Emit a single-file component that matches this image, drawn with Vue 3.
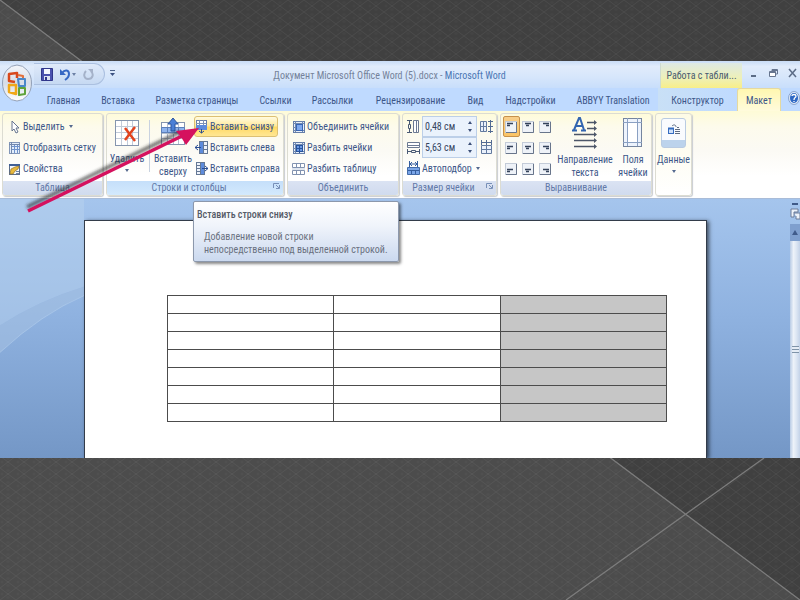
<script setup>
import { ref } from 'vue'

const tabs = [
  'Главная', 'Вставка', 'Разметка страницы', 'Ссылки', 'Рассылки', 'Рецензирование',
  'Вид', 'Надстройки', 'ABBYY Translation', 'Конструктор', 'Макет',
]
const tableTools = [
  { icon: 'cursor', label: 'Выделить', menu: true },
  { icon: 'gridlines', label: 'Отобразить сетку' },
  { icon: 'properties', label: 'Свойства' },
]
const mergeTools = [
  { icon: 'merge', label: 'Объединить ячейки' },
  { icon: 'split', label: 'Разбить ячейки' },
  { icon: 'split-table', label: 'Разбить таблицу' },
]
const rowHeight = ref('0,48 см')
const colWidth = ref('5,63 см')

const alignments = []
for (let row = 0; row < 3; row++) {
  for (let col = 0; col < 3; col++) {
    alignments.push({
      y: [4, 6, 8][row],
      long: [2, 3, 4][col],
      short: [2, 4, 7][col],
      label: ['Сверху', 'По центру', 'Снизу'][row] + ', ' + ['слева', 'посередине', 'справа'][col],
    })
  }
}
const active = ref(0)
</script>

<template>
  <div class="slide">
    <svg class="backdrop" viewBox="0 0 800 600" preserveAspectRatio="none" aria-hidden="true">
      <defs>
        <pattern id="weave" width="16" height="12" patternUnits="userSpaceOnUse">
          <path d="M0 0L16 12M16 0L0 12" stroke="#fff" stroke-opacity=".05" fill="none" />
          <path d="M8 1L10 2.500L8 4L6 2.500ZM8 8L10 9.500L8 11L6 9.500ZM2 4.500L4 6L2 7.500L0 6Z" fill="#fff" fill-opacity=".02" />
        </pattern>
      </defs>
      <rect width="800" height="600" fill="#404040" />
      <path d="M0 0L800 600H0Z" fill="#4c4c4c" />
      <rect width="800" height="600" fill="url(#weave)" />
      <path d="M0 0L800 600M566 600L764 458" stroke="#7c7c7c" stroke-width="1.300" fill="none" />
    </svg>

    <svg class="symbols" aria-hidden="true">
      <symbol id="cursor" viewBox="0 0 13 14"><path d="M4 1V11L6 9L8 13L10 12L8 8H11Z" fill="#fff" stroke="#66758f" /></symbol>
      <symbol id="gridlines" viewBox="0 0 13 14">
        <rect x="1.500" y="1.500" width="10" height="11" fill="#e4eefb" stroke="#8296b8" />
        <path d="M6.500 4V12M9.500 4V12M4 5.500H12M4 8.500H12" stroke="#6f93cd" />
        <path d="M3.500 1V13M1 3.500H12" stroke="#7388ac" />
      </symbol>
      <symbol id="properties" viewBox="0 0 13 14">
        <rect x="1.500" y="2.500" width="10" height="10" fill="#f4f7fc" stroke="#5c6d89" />
        <path d="M1 3H12" stroke="#3f5f96" stroke-width="2" />
        <path d="M2 12L3 7L7 5L11 4L10 7L7 9L5 12Z" fill="#e9b93c" stroke="#947225" stroke-width=".7" />
        <path d="M8 9.500H11M8 11.500H11" stroke="#6f83a3" />
      </symbol>
      <symbol id="row-below" viewBox="0 0 13 15">
        <rect x="1.500" y="1.500" width="10" height="9" fill="#fff" stroke="#677ea8" />
        <path d="M1 4.500H11M4.500 1V7M8.500 1V7" stroke="#7d92b5" />
        <rect x="1" y="6" width="11" height="5" fill="#5d8bdc" />
        <path d="M6.500 10V14M4 12L6.500 14L9 12" stroke="#2a4d90" fill="none" />
      </symbol>
      <symbol id="col-left" viewBox="0 0 13 15">
        <rect x="4.500" y="1.500" width="8" height="12" fill="#eef3fb" stroke="#657895" />
        <rect x="5" y="2" width="3" height="11" fill="#5d8bdc" />
        <path d="M8.500 1V13M8 5.500H12M8 9.500H12" stroke="#657895" />
        <path d="M6 7.500H0M3 5L0 7.500L3 10" stroke="#294d94" fill="none" />
      </symbol>
      <symbol id="col-right" viewBox="0 0 13 15">
        <rect x="1.500" y="1.500" width="8" height="12" fill="#eef3fb" stroke="#657895" />
        <rect x="6" y="2" width="3" height="11" fill="#5d8bdc" />
        <path d="M5.500 1V13M1 4.500H6M1 7.500H6M1 10.500H6" stroke="#657895" />
        <path d="M7 7.500H13M10 5L13 7.500L10 10" stroke="#294d94" fill="none" />
      </symbol>
      <symbol id="merge" viewBox="0 0 13 14">
        <rect x="1.500" y="1.500" width="11" height="11" fill="#e7effa" stroke="#647da8" />
        <path d="M3.500 1V12M1 3.500H12M10.500 1V4M10.500 10V12M1 10.500H12M1 7.500H4" stroke="#7088af" />
        <rect x="4.500" y="4.500" width="6" height="6" fill="#7fa9ee" stroke="#3966b4" />
      </symbol>
      <symbol id="split" viewBox="0 0 13 14">
        <rect x="1.500" y="1.500" width="11" height="11" fill="#e7effa" stroke="#647da8" />
        <path d="M3.500 1V12M1 3.500H12M10.500 1V4M1 10.500H12M1 7.500H4" stroke="#7088af" />
        <rect x="4.500" y="4.500" width="6" height="6" fill="#6d9ae5" stroke="#28549d" />
        <path d="M7.500 4V12M4 7.500H11" stroke="#28549d" />
      </symbol>
      <symbol id="split-table" viewBox="0 0 13 14">
        <path d="M.5 1.500H12.500V5.500H.5ZM4.500 1V5M8.500 1V5M.5 8.500H12.500V12.500H.5ZM4.500 9V13M8.500 9V13" fill="#fff" stroke="#8293b0" />
        <path d="M0 7H13" stroke="#c3cfe2" />
      </symbol>
      <symbol id="autofit" viewBox="0 0 13 15">
        <path d="M2.500 0V6M10.500 0V6M3 3H10M5 1L3 3L5 5M8 1L10 3L8 5" stroke="#345d9f" fill="none" />
        <path d="M.5 6.500H12.500V13.500H.5Z" fill="#7aa5e8" stroke="#436ba8" />
        <path d="M1 9.500H12M4.500 9V13M8.500 9V13" stroke="#355e9e" />
      </symbol>
    </svg>

    <main class="word">
      <header class="title-bar">
        <div class="quick">
          <button aria-label="Сохранить">
            <svg width="12" height="13" viewBox="0 0 12 13"><path d="M.5 .5H11.500V12.500H.5Z" fill="#4a51ae" stroke="#30368a" /><rect x="3" y="1" width="6" height="5" fill="#f5f7ff" /><rect x="3" y="8" width="6" height="4" fill="#dde2f2" /><rect x="4" y="9" width="2" height="3" fill="#30368a" /></svg>
          </button>
          <button class="undo" aria-label="Отменить">
            <svg width="18" height="13" viewBox="0 0 18 13"><path d="M3 5C6 1 10 2 10 6C10 8 9 10 6 12" stroke="#3768c4" stroke-width="2" fill="none" /><path d="M1 1V7H7Z" fill="#3768c4" /><path d="M13 5H17L15 8Z" fill="#6c80a5" /></svg>
          </button>
          <button aria-label="Повторить">
            <svg width="12" height="13" viewBox="0 0 12 13"><path d="M3 3C0 6 1 11 5 11C10 11 11 6 8 3" stroke="#a5b2c9" stroke-width="2" fill="none" /><path d="M5 1H10V6Z" fill="#a5b2c9" /></svg>
          </button>
        </div>
        <button class="customize" aria-label="Настройка панели быстрого доступа">
          <svg width="7" height="8" viewBox="0 0 7 8"><path d="M1 1.500H6" stroke="#4b6088" /><path d="M1 4H6L3.500 7Z" fill="#3a5080" /></svg>
        </button>
        <h1><span>Документ Microsoft Office Word (5).docx -</span> Microsoft Word</h1>
        <div class="context">Работа с табли...</div>
        <div class="controls">
          <button aria-label="Свернуть"><svg width="9" height="10" viewBox="0 0 9 10"><path d="M2 8H7" stroke="#5c6c86" stroke-width="2" /></svg></button>
          <button aria-label="Восстановить"><svg width="9" height="10" viewBox="0 0 9 10"><path d="M3 3V1.500H8.500V6H6" fill="none" stroke="#66758f" /><path d="M.5 3.500H6.500V8.500H.5Z" fill="#fff" stroke="#66758f" /><path d="M1 4.500H6M3 2.500H8" stroke="#66758f" /></svg></button>
          <button aria-label="Закрыть"><svg width="9" height="10" viewBox="0 0 9 10"><path d="M1 1L8 9M8 1L1 9" stroke="#5c6c86" stroke-width="1.500" /></svg></button>
        </div>
      </header>

      <button class="orb" aria-label="Кнопка Office">
        <svg width="34" height="38" viewBox="0 0 34 38">
          <defs>
            <linearGradient id="orb-fill" x1="0" y1="0" x2="0" y2="1"><stop offset="0" stop-color="#f4f6fa" /><stop offset=".5" stop-color="#d6dde8" /><stop offset="1" stop-color="#fff" /></linearGradient>
          </defs>
          <ellipse cx="16" cy="19" rx="14.500" ry="18" fill="url(#orb-fill)" stroke="#93a1b8" />
          <g fill="none" stroke-width="2.500" stroke-linejoin="round">
            <path d="M14 18L8 17V10L16 9V14" stroke="#d9481c" />
            <path d="M17 11L22 12V14" stroke="#e2703a" stroke-width="2" />
            <path d="M17 15H24V22H18Z" stroke="#4a87c9" stroke-width="2" />
            <path d="M15 21H8V28L15 30Z" stroke="#f0a818" />
            <path d="M18 24H24V30L18 31Z" stroke="#5fa33a" stroke-width="2" />
          </g>
        </svg>
      </button>

      <nav class="tabs" aria-label="Вкладки ленты">
        <button v-for="tab in tabs" :key="tab" :class="{ selected: tab === 'Макет', contextual: tab === 'Конструктор' }">{{ tab }}</button>
        <button class="help" aria-label="Справка">
          <svg width="12" height="14" viewBox="0 0 12 14"><ellipse cx="6" cy="7" rx="5.500" ry="6.500" fill="#dce8f8" stroke="#8ba5cf" /><ellipse cx="6" cy="7" rx="4" ry="5" fill="#2e68c4" /><path d="M4 5C4 3 8 3 8 5C8 7 6 6 6 9M6 10V11" fill="none" stroke="#fff" stroke-width="1.300" /></svg>
        </button>
      </nav>

      <section class="ribbon" aria-label="Макет">
        <div class="group g-table">
          <div class="body stack">
            <button v-for="t in tableTools" :key="t.label" class="tool">
              <svg width="13" height="14"><use :href="'#' + t.icon" /></svg>{{ t.label }}<i v-if="t.menu" class="caret"></i>
            </button>
          </div>
          <footer>Таблица</footer>
        </div>

        <div class="group g-rows hot">
          <div class="body">
            <button class="big del">
              <svg width="26" height="29" viewBox="0 0 26 29">
                <rect x="1.500" y="1.500" width="23" height="25" fill="#fff" stroke="#8595ae" />
                <path d="M2 7.500H24M2 13.500H24M2 19.500H24M7.500 2V26M13.500 2V26M18.500 2V26" stroke="#c2cbd9" />
                <path d="M11 9L21 22M21 8L11 21" stroke="#e2431e" stroke-width="2.500" fill="none" />
              </svg>
              <span>Удалить</span><i class="caret"></i>
            </button>
            <div class="rule"></div>
            <button class="big above">
              <svg width="26" height="29" viewBox="0 0 26 29">
                <rect x="1.500" y="4.500" width="23" height="22" fill="#fff" stroke="#8595ae" />
                <path d="M2 15.500H24M2 20.500H24M7.500 5V26M13.500 5V26M18.500 5V26" stroke="#b4bfd0" />
                <path d="M1.500 9.500H24.500V14.500H1.500ZM7.500 9V15M18.500 9V15" fill="#8fb4ee" stroke="#5c80bb" />
                <path d="M13 0L18 6H15V13H11V6H8Z" fill="#4a7fd6" stroke="#2d569f" />
              </svg>
              <span>Вставить<br>сверху</span>
            </button>
            <div class="stack inserts">
              <button class="tool hover" aria-describedby="tip"><svg width="13" height="15"><use href="#row-below" /></svg>Вставить снизу</button>
              <button class="tool"><svg width="13" height="15"><use href="#col-left" /></svg>Вставить слева</button>
              <button class="tool"><svg width="13" height="15"><use href="#col-right" /></svg>Вставить справа</button>
            </div>
          </div>
          <footer class="with-launcher">Строки и столбцы
            <button class="launcher" aria-label="Параметры строк и столбцов"><svg width="7" height="8" viewBox="0 0 7 8"><path d="M.5 6V1.500H6M3 3L6 6M6.500 3V6.500H3" fill="none" stroke="#7890b8" /></svg></button>
          </footer>
          <div id="tip" class="tooltip" role="tooltip">
            <strong>Вставить строки снизу</strong>
            <p>Добавление новой строки<br>непосредственно под выделенной строкой.</p>
          </div>
        </div>

        <div class="group g-merge">
          <div class="body stack">
            <button v-for="t in mergeTools" :key="t.label" class="tool">
              <svg width="13" height="14"><use :href="'#' + t.icon" /></svg>{{ t.label }}
            </button>
          </div>
          <footer>Объединить</footer>
        </div>

        <div class="group g-size">
          <div class="body stack">
            <div class="size-row">
              <svg width="13" height="15" viewBox="0 0 13 15"><path d="M6.500 1.500H11.500V13.500H6.500ZM9.500 1V14" fill="#fff" stroke="#6c7a92" /><path d="M0 1.500H5M0 13.500H5M2.500 2V5M2.500 10V13M1.500 5.500H3.500V9.500H1.500Z" fill="none" stroke="#4a5a75" /></svg>
              <label class="spin"><input v-model="rowHeight" aria-label="Высота строки"><i class="arrows"></i></label>
              <button aria-label="Выровнять высоту строк"><svg width="13" height="15" viewBox="0 0 13 15"><path d="M.5 2.500H6.500V12.500H.5ZM1 7.500H7M3.500 2V13" fill="#eaf1fb" stroke="#637a9f" /><path d="M8 2.500H13M8 12.500H13M8 7.500H13M10.500 1V14" stroke="#536b93" /></svg></button>
            </div>
            <div class="size-row">
              <svg width="13" height="15" viewBox="0 0 13 15"><path d="M.5 2.500H12.500V7.500H.5ZM1 5.500H12" fill="#fff" stroke="#6c7a92" /><path d="M.5 9V14M12.500 9V14M1 11.500H4M9 11.500H12M4.500 10.500H8.500V12.500H4.500Z" fill="none" stroke="#4a5a75" /></svg>
              <label class="spin"><input v-model="colWidth" aria-label="Ширина столбца"><i class="arrows"></i></label>
              <button aria-label="Выровнять ширину столбцов"><svg width="13" height="15" viewBox="0 0 13 15"><path d="M1.500 5.500H11.500V13.500H1.500ZM1 9.500H12M6.500 6V13" fill="#eaf1fb" stroke="#637a9f" /><path d="M1.500 0V5M11.500 0V5M6.500 0V5M1 2.500H12" stroke="#536b93" /></svg></button>
            </div>
            <button class="tool"><svg width="13" height="15"><use href="#autofit" /></svg>Автоподбор<i class="caret"></i></button>
          </div>
          <footer class="with-launcher">Размер ячейки
            <button class="launcher" aria-label="Параметры размера ячейки"><svg width="7" height="8" viewBox="0 0 7 8"><path d="M.5 6V1.500H6M3 3L6 6M6.500 3V6.500H3" fill="none" stroke="#7890b8" /></svg></button>
          </footer>
        </div>

        <div class="group g-align">
          <div class="body">
            <div class="align-grid">
              <button v-for="(a, i) in alignments" :key="i" :class="{ on: active === i }" :aria-label="a.label" @click="active = i">
                <svg width="13" height="14" viewBox="0 0 13 14">
                  <rect x=".5" y="1.500" width="11" height="11" fill="#eef2f8" stroke="#c3cbd8" />
                  <path d="M11.500 2V12.500H1" fill="none" stroke="#68758b" />
                  <path :d="`M${a.long} ${a.y - .5}h6M${a.short} ${a.y + 1.5}h3`" stroke="#34425a" stroke-width="1.500" />
                </svg>
              </button>
            </div>
            <button class="big direction">
              <svg width="26" height="32" viewBox="0 0 26 32">
                <path d="M2 13L7 1H8L12 13M4 9H10M0 13.500H5M9 13.500H14" stroke="#3265b0" stroke-width="2" fill="none" />
                <path d="M15 5.500H23M15 11.500H23M2 17.500H23M2 23.500H23M2 29.500H23" stroke="#4c5668" stroke-width="1.400" />
                <path d="M22 3L25 5.500L22 8ZM22 9L25 11.500L22 14ZM22 15L25 17.500L22 20ZM22 21L25 23.500L22 26ZM22 27L25 29.500L22 32Z" fill="#4c5668" />
              </svg>
              <span>Направление<br>текста</span>
            </button>
            <button class="big margins">
              <svg width="22" height="32" viewBox="0 0 22 32">
                <rect x="1.500" y="1.500" width="18" height="28" fill="#edf3fc" stroke="#75859f" />
                <rect x="5" y="5" width="11" height="20" fill="#fff" />
                <path d="M5.500 1V29M15.500 1V29M1 5.500H20M1 25.500H20" stroke="#8aa0c2" />
              </svg>
              <span>Поля<br>ячейки</span>
            </button>
          </div>
          <footer>Выравнивание</footer>
        </div>

        <div class="group g-data">
          <button class="big data">
            <span class="tile">
              <svg width="14" height="12" viewBox="0 0 14 12"><rect x="1.500" y="4.500" width="5" height="5" fill="#cfe1fa" stroke="#356cc0" /><path d="M1 4.500H7" stroke="#356cc0" stroke-width="2" /><path d="M5 2C7 0 9 1 9 3M8 5.500H13M8 7.500H13M8 9.500H13M10 3.500H12" stroke="#5d6b82" fill="none" /></svg>
            </span>
            <span>Данные</span><i class="caret"></i>
          </button>
        </div>
      </section>

      <section class="workspace">
        <svg class="swoosh" viewBox="0 0 84 260" preserveAspectRatio="none" aria-hidden="true">
          <path d="M0 0H84V88Q38 102 0 127Z" fill="#b8d2ee" fill-opacity=".5" />
          <path d="M0 127Q38 102 84 88V97Q42 115 0 154Z" fill="#a5c1e2" fill-opacity=".55" />
          <path d="M0 154Q42 115 84 97" fill="none" stroke="#b9d2ef" stroke-opacity=".5" />
        </svg>
        <article class="page">
          <table aria-label="Таблица документа">
            <tbody>
              <tr v-for="r in 7" :key="r"><td></td><td></td><td class="picked"></td></tr>
            </tbody>
          </table>
        </article>
        <aside class="scroll">
          <span class="splitter"></span>
          <button aria-label="Линейка"><svg width="10" height="12" viewBox="0 0 10 12"><path d="M1 1H8V4H4V9H1ZM4 5H10V11H6V8" fill="#edf2fa" stroke="#6d7d9a" /></svg></button>
          <button class="up" aria-label="Прокрутить вверх"><svg width="10" height="17" viewBox="0 0 10 17"><path d="M2 11L5 6L8 11Z" fill="#405b8a" /></svg></button>
          <div class="track"><span class="grip"></span></div>
        </aside>
      </section>

      <svg class="pointer" width="210" height="160" viewBox="0 0 210 160" aria-hidden="true">
        <defs><filter id="soft" x="-10%" y="-10%" width="120%" height="120%"><feGaussianBlur stdDeviation="1.500" /></filter></defs>
        <path d="M27 146L180 71" stroke="#222" stroke-opacity=".6" stroke-width="4" filter="url(#soft)" />
        <path d="M28 150L184 74" stroke="#d5115e" stroke-width="3.500" />
        <path d="M199 67L176 70L181 76L186 84Z" fill="#d5115e" />
      </svg>
    </main>
  </div>
</template>

<style>
body { margin: 0; }
</style>

<style scoped>
.slide {
  position: relative;
  min-height: 100vh;
  padding: 61px 0 142px;
  box-sizing: border-box;
  background: #444;
  font: 10px/13px "Roboto Condensed", Roboto, "Open Sans", sans-serif;
  color: #3c5688;
}
.backdrop { position: absolute; inset: 0; width: 100%; height: 100%; }
.symbols { position: absolute; width: 0; height: 0; }
svg { display: block; flex: none; }
button {
  font: inherit; color: inherit; background: none; border: 0; padding: 0; margin: 0;
  display: flex; align-items: center; justify-content: center;
}
.word { position: relative; overflow: hidden; background: #bfdbff; }

.title-bar {
  display: flex; height: 27px;
  background: linear-gradient(#c9dcf6, #e1ecfb 20%, #d6e6fb 60%, #c8defb);
}
.quick {
  display: flex; align-items: center; gap: 6px;
  width: 71px; height: 22px; margin: 2px 0 0 34px; padding-left: 7px; box-sizing: border-box;
  border: 1px solid #abc0e0; border-left: 0; border-radius: 0 11px 11px 0;
  background: linear-gradient(#dfeafa, #c6d9f2);
}
.customize { width: 15px; height: 24px; margin-right: -1px; }
h1 { flex: 1; margin: 0; font-size: 10px; font-weight: 400; line-height: 29px; text-align: center; white-space: nowrap; color: #4a76b4; }
h1 span { color: #74829a; }
.context {
  width: 82px; margin-top: 2px; line-height: 26px; text-align: center; white-space: nowrap;
  background: linear-gradient(#dde9e4, #eef0b8 60%, #f8ee88);
  border-left: 1px solid #cfdcd0; box-sizing: border-box; color: #4a5c70;
}
.controls { width: 58px; display: flex; justify-content: space-between; align-items: flex-start; padding: 7px 3px 0 7px; box-sizing: border-box; }

.orb { position: absolute; left: 1px; top: 3px; }

.tabs {
  display: grid; height: 23px; padding-left: 36px;
  grid-template-columns: 55fr 54fr 104fr 53fr 61fr 95fr 35fr 75fr 90fr 79fr 44fr 19fr;
  background: #bfdaff;
}
.tabs button { white-space: nowrap; padding-top: 2px; }
.tabs .contextual { background: linear-gradient(90deg, #c9e0f6, #bfdaff); }
.tabs .selected {
  background: linear-gradient(#fff7b0, #fffbdc); border: 1px solid #e5d9a0; border-bottom: 0;
  border-radius: 3px 3px 0 0; padding-top: 1px;
}
.tabs .help { padding: 0 0 4px 6px; }

.ribbon {
  display: flex; gap: 3px; padding: 2px; height: 83px;
  background: linear-gradient(#fefbd6, #fdfbec 18%, #fbfaf4 45%, #fff 75%);
  border-bottom: 1px solid #a9bcd8;
}
.group {
  position: relative; display: flex; flex-direction: column; box-sizing: border-box;
  border: 1px solid #dcdcd2; border-radius: 3px;
  box-shadow: 1px 1px 1px #c9cdd2;
}
.g-table { width: 101px; }
.g-rows { width: 178px; }
.g-merge { width: 112px; }
.g-size { width: 95px; }
.g-align { width: 152px; }
.g-data { width: 37px; background: linear-gradient(#fdfbe6, #fff); }
.body { flex: 1; display: flex; padding-top: 2px; }
.stack { display: flex; flex-direction: column; }
.tool {
  height: 21px; gap: 2px; justify-content: flex-start; padding-left: 5px; white-space: nowrap;
}
.g-merge .tool, .g-size .tool { padding-left: 4px; }
footer {
  position: relative; height: 14px; line-height: 14px; text-align: center; color: #6279a8;
  background: linear-gradient(#dbe3f3, #d0dbee); border-radius: 0 0 2px 2px;
}
.with-launcher { padding-right: 12px; }
.hot footer { background: linear-gradient(#c5dffa, #d3e9fd); }
.launcher { position: absolute; right: 3px; top: 1px; }
.caret { width: 0; height: 0; margin-left: 2px; border: 2px solid transparent; border-top: 3px solid #54698f; border-bottom: 0; }
.big { flex-direction: column; justify-content: flex-start; line-height: 13px; text-align: center; white-space: nowrap; }
.big .caret { margin: 4px 0 0; }
.del { width: 40px; padding-top: 3px; }
.del span { margin-top: 4px; }
.rule { width: 1px; height: 52px; margin: 4px 2px 0; background: #c9d2e0; }
.above { width: 42px; padding-top: 2px; }
.above span { margin-top: 5px; }
.inserts .tool { padding-left: 1px; padding-right: 3px; }
.inserts .hover {
  align-self: flex-start; border: 1px solid #dcc073; border-radius: 3px; padding-left: 0;
  background: linear-gradient(#fffbe0, #ffeaa0 45%, #ffd966 55%, #ffe794);
}
.tooltip {
  position: absolute; z-index: 3; left: 86px; top: 87px; width: 206px; height: 61px; box-sizing: border-box;
  padding: 6px 3px; border: 1px solid #8c98ac; border-radius: 2px;
  background: linear-gradient(#fff, #f0f4fb 40%, #cbd9ef);
  box-shadow: 2px 2px 3px #0007; color: #6a7180; white-space: nowrap;
}
.tooltip strong { display: block; color: #555b68; line-height: 13px; font-weight: 500; }
.tooltip p { margin: 9px 0 0 7px; line-height: 13px; }

.size-row { display: flex; align-items: center; height: 21px; padding-left: 4px; gap: 2px; }
.size-row button { margin-left: 1px; }
.spin { display: flex; align-items: center; width: 55px; height: 21px; box-sizing: border-box; border: 1px solid #bccfe8; background: #eaf2fc; }
.spin input { flex: 1; min-width: 0; border: 0; padding: 0 0 0 2px; font: inherit; color: #35445f; background: none; outline: 0; }
.arrows { display: grid; gap: 5px; width: 12px; justify-items: center; }
.arrows::before, .arrows::after { content: ""; border: 2px solid transparent; }
.arrows::before { border-bottom: 3px solid #3c5078; border-top: 0; }
.arrows::after { border-top: 3px solid #3c5078; border-bottom: 0; }

.align-grid { display: grid; grid-template-columns: repeat(3, 17px); grid-auto-rows: 21px; margin-left: 2px; }
.align-grid button { border: 1px solid transparent; border-radius: 2px; }
.align-grid .on { border-color: #c7914b; background: linear-gradient(#f8cf8b, #fbc465); }
.direction { width: 60px; padding-top: 1px; margin-left: 1px; }
.margins { flex: 1; padding-top: 1px; }
.direction span, .margins span { margin-top: 4px; }
.data { padding-top: 4px; }
.tile {
  display: flex; align-items: center; justify-content: center; width: 25px; height: 30px; box-sizing: border-box; margin-bottom: 5px;
  padding-bottom: 6px; border: 1px solid #b9cbe2; border-radius: 3px;
  background: linear-gradient(#f9fbfe 75%, #bcd3ec 75%);
}

.workspace {
  position: relative; display: flex;
  background: linear-gradient(#a5c5ed, #8fb2e0 45%, #7497c6);
}
.swoosh { position: absolute; left: 0; top: 0; width: 84px; height: 100%; }
.page {
  flex: 1; margin: 21px 83px 0 84px; padding: 74px 39px 36px 82px; background: #fff;
  border: 1px solid #333c4a; border-bottom: 0; box-shadow: 2px 1px 4px #0009;
}
table { width: 100%; border-collapse: collapse; table-layout: fixed; }
td { height: 17px; padding: 0; border: 1px solid #4c4c4c; }
.picked { background: #c6c6c6; }
.scroll { width: 10px; display: flex; flex-direction: column; padding-top: 4px; box-sizing: border-box; }
.splitter { height: 2px; margin: 0 2px 3px; background: #3f5a88; }
.up { height: 17px; margin-top: 4px; background: #7f9fce; }
.track {
  flex: 1; display: flex; align-items: center; justify-content: center;
  background: linear-gradient(90deg, #b8cbe5, #edf2f9 35%, #dfe8f4 60%, #c3d2e8);
}
.grip { width: 7px; height: 7px; background: repeating-linear-gradient(#7f93a8 0 1px, #e5ecf5 1px 3px); }
.pointer { position: absolute; z-index: 4; left: 0; top: 0; pointer-events: none; }
</style>
